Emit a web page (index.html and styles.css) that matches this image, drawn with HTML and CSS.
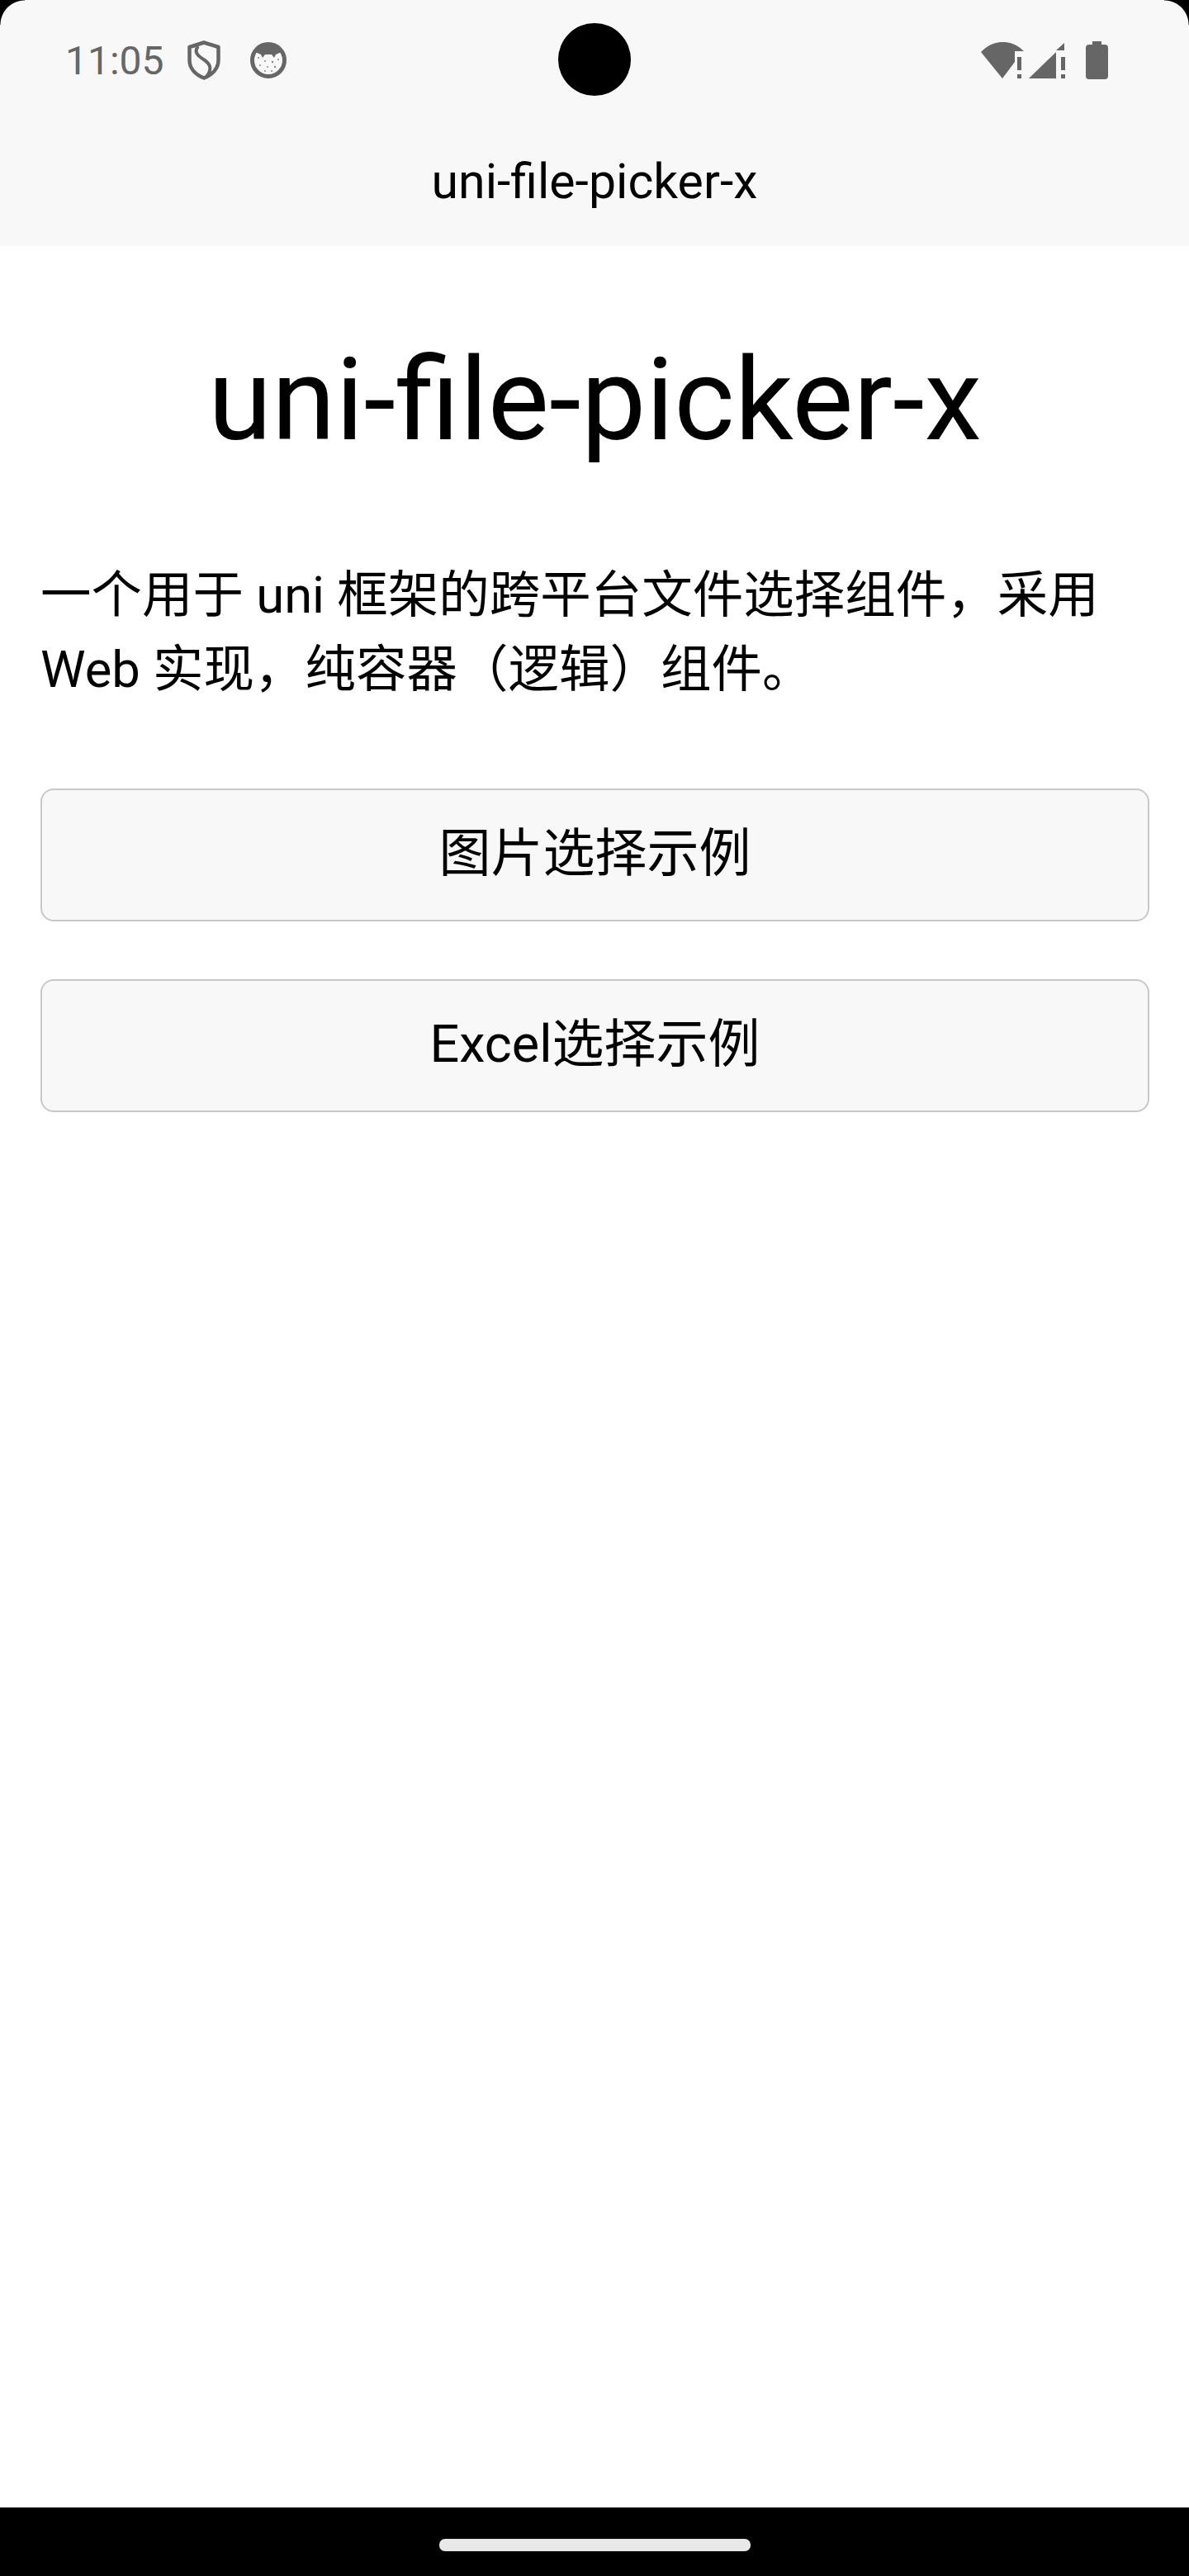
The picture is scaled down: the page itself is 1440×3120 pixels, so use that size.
FILE: index.html
```html
<!DOCTYPE html>
<html lang="zh-CN">
<head>
    <meta charset="UTF-8">
    <meta name="viewport" content="width=device-width, initial-scale=1.0">
    <title>uni-file-picker-x</title>
    <link rel="stylesheet" href="styles.css">
</head>
<body>
    <div class="screen">
        <header class="top-bar">
            <div class="status-bar">
                <div class="status-left">
                    <span class="clock">11:05</span>
                    <svg class="icon-shield" width="40" height="48" viewBox="0 0 40 48">
                        <path d="M20 2.500 L37.500 8 V24 C37.500 34 30 41.500 20 45.500 C10 41.500 2.500 34 2.500 24 V8 Z" fill="none" stroke="#666" stroke-width="4.500" stroke-linejoin="round"/>
                        <path d="M13 7 C7 14 13 19 21 24 C28 29 30 35 23 44" fill="none" stroke="#666" stroke-width="4"/>
                    </svg>
                    <svg class="icon-face" width="44" height="44" viewBox="0 0 44 44">
                        <circle cx="22" cy="22" r="19.500" fill="#f8f8f8" stroke="#666" stroke-width="5"/>
                        <path d="M6 12 C11 1 33 1 38 12 L31 15 L29 19 L26 15 H18 L15 19 L13 15 Z" fill="#666"/>
                        <g fill="#888">
                            <circle cx="10" cy="19" r="1"/><circle cx="18" cy="23" r="1"/><circle cx="27" cy="24" r="1.200"/>
                            <circle cx="34" cy="21" r="1"/><circle cx="12" cy="28" r="1"/><circle cx="21" cy="30" r="1"/>
                            <circle cx="30" cy="30" r="1.200"/><circle cx="18" cy="35" r="1"/><circle cx="26" cy="35" r="1"/>
                        </g>
                    </svg>
                </div>
                <div class="status-right">
                    <svg class="icon-wifi" width="52" height="45" viewBox="0 0 52 45">
                        <path d="M0 12 C15 -4 37 -4 52 11 H41 V24 L26 44 Z" fill="#666"/>
                        <rect x="44" y="18" width="5" height="16" fill="#666"/>
                        <rect x="44" y="39" width="5" height="5" fill="#666"/>
                    </svg>
                    <svg class="icon-signal" width="44" height="45" viewBox="0 0 44 45">
                        <path d="M0 44 L33 12 V44 Z" fill="#666"/>
                        <path d="M33 10 L43 1 V10 Z" fill="#666"/>
                        <rect x="39" y="18" width="5" height="16" fill="#666"/>
                        <rect x="39" y="39" width="5" height="5" fill="#666"/>
                    </svg>
                    <svg class="icon-battery" width="27" height="46" viewBox="0 0 27 46">
                        <path d="M8 0 H19 V4 H23 Q27 4 27 8 V42 Q27 46 23 46 H4 Q0 46 0 42 V8 Q0 4 4 4 H8 Z" fill="#666"/>
                    </svg>
                </div>
            </div>
            <div class="nav-title">uni-file-picker-x</div>
        </header>

        <main class="content">
            <h1 class="page-title">uni-file-picker-x</h1>
            <p class="intro">一个用于 uni 框架的跨平台文件选择组件，采用 Web 实现，纯容器（逻辑）组件。</p>
            <button class="demo-btn">图片选择示例</button>
            <button class="demo-btn">Excel选择示例</button>
        </main>

        <footer class="nav-bar">
            <div class="home-handle"></div>
        </footer>

        <div class="camera"></div>
        <div class="corner corner-left"></div>
        <div class="corner corner-right"></div>
    </div>
</body>
</html>
```

FILE: styles.css
```css
* {
    box-sizing: border-box;
}

body {
    margin: 0;
    background-color: #fff;
    font-family: Roboto, "Noto Sans CJK SC", sans-serif;
    color: #000;
}

.screen {
    position: relative;
    display: flex;
    flex-direction: column;
    height: 3120px;
    overflow: hidden;
}

.top-bar {
    height: 298px;
    background-color: #f8f8f8;
}

.status-bar {
    display: flex;
    justify-content: space-between;
    align-items: center;
    height: 146px;
    padding: 0 98px 0 79px;
}

.status-left,
.status-right {
    display: flex;
    align-items: center;
}

.clock {
    font-size: 48px;
    color: #666;
    margin-right: 28px;
}

.icon-face {
    margin-left: 36px;
}

.icon-signal {
    margin-left: 6px;
}

.icon-battery {
    margin-left: 25px;
}

.nav-title {
    text-align: center;
    font-size: 59px;
    line-height: 72px;
    margin-top: 38px;
}

.content {
    flex: 1;
    padding: 0 48px 0 49px;
}

.page-title {
    margin: 106px 0 0;
    text-align: center;
    font-size: 140px;
    font-weight: 400;
    line-height: 160px;
}

.intro {
    margin: 112px 0 0;
    font-size: 61.5px;
    line-height: 90px;
}

.demo-btn {
    display: block;
    width: 100%;
    height: 161px;
    margin-top: 70px;
    padding: 0 0 16px;
    background-color: #f8f8f8;
    border: 2px solid #c8c8c8;
    border-radius: 16px;
    font-family: inherit;
    font-size: 63px;
    color: #000;
}

.intro + .demo-btn {
    margin-top: 99px;
}

.nav-bar {
    display: flex;
    justify-content: center;
    padding-top: 38px;
    height: 83px;
    background-color: #000;
}

.home-handle {
    width: 377px;
    height: 15px;
    border-radius: 7px;
    background-color: #e8e8e8;
}

.camera {
    position: absolute;
    top: 28px;
    left: 676px;
    width: 88px;
    height: 88px;
    border-radius: 50%;
    background-color: #000;
}

.corner {
    position: absolute;
    top: 0;
    width: 30px;
    height: 30px;
    background: radial-gradient(circle at 100% 100%, transparent 29px, #000 30px);
}

.corner-left {
    left: 0;
}

.corner-right {
    right: 0;
    transform: scaleX(-1);
}
```
